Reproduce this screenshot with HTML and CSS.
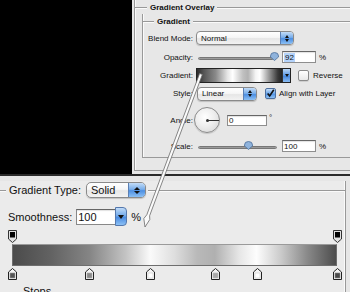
FILE: index.html
```html
<!DOCTYPE html>
<html>
<head>
<meta charset="utf-8">
<link rel="stylesheet" href="styles.css">
</head>
<body>
<div class="stage">
  <div class="top">
    <div class="void"></div>
    <div class="panel">
      <div class="group outer">
        <div class="gtitle t-outer"><span>Gradient Overlay</span></div>
        <div class="group inner">
          <div class="gtitle t-inner"><span>Gradient</span></div>
          <div class="form">
            <label class="lbl">Blend Mode:</label>
            <div class="ctl">
              <div class="select sel-blend"><span class="val">Normal</span><span class="step"><i class="up"></i><i class="dn"></i></span></div>
            </div>

            <label class="lbl">Opacity:</label>
            <div class="ctl">
              <div class="slider sl-opacity"><div class="track"></div><svg class="thumb" style="left:72px" width="9" height="9" viewBox="0 0 9 9"><path d="M0.5,4 A4,3.5 0 0 1 8.5,4 L8.5,5 L4.5,8.5 L0.5,5 Z" fill="#8fb3dc" stroke="#4d6f99" stroke-width="0.8"/></svg></div>
              <div class="field f-num"><span class="hl">92</span></div>
              <span class="unit">%</span>
            </div>

            <label class="lbl">Gradient:</label>
            <div class="ctl">
              <div class="gprev"><div class="gfill"></div><div class="garrow"><i class="dn"></i></div></div>
              <span class="check"></span>
              <span class="ctext">Reverse</span>
            </div>

            <label class="lbl">Style:</label>
            <div class="ctl">
              <div class="select sel-style"><span class="val">Linear</span><span class="step"><i class="up"></i><i class="dn"></i></span></div>
              <span class="check on"><svg width="11" height="11" viewBox="0 0 11 11"><path d="M2,5.5 L4.5,8.5 L9.5,1" fill="none" stroke="#111" stroke-width="2"/></svg></span>
              <span class="ctext c-align">Align with Layer</span>
            </div>

            <label class="lbl">Angle:</label>
            <div class="ctl">
              <div class="dial"><span class="hand"></span></div>
              <div class="field f-angle">0</div>
              <span class="deg">°</span>
            </div>

            <label class="lbl">Scale:</label>
            <div class="ctl">
              <div class="slider sl-scale"><div class="track"></div><svg class="thumb" style="left:46px" width="9" height="9" viewBox="0 0 9 9"><path d="M0.5,4 A4,3.5 0 0 1 8.5,4 L8.5,5 L4.5,8.5 L0.5,5 Z" fill="#8fb3dc" stroke="#4d6f99" stroke-width="0.8"/></svg></div>
              <div class="field f-num">100</div>
              <span class="unit">%</span>
            </div>
          </div>
        </div>
      </div>
    </div>
  </div>

  <div class="bottom">
    <div class="gtype">
      <div class="btitle">
        <span class="btext">Gradient Type:</span>
        <div class="select big sel-solid"><span class="val">Solid</span><span class="step"><i class="up"></i><i class="dn"></i></span></div>
      </div>
      <div class="smooth">
        <label class="blbl">Smoothness:</label>
        <div class="combo"><span class="cval">100</span><span class="cbtn"><i class="dn"></i></span></div>
        <span class="bunit">%</span>
      </div>
      <div class="ramp">
        <div class="ostops">
          <svg class="ostop" style="left:0%" width="9" height="13" viewBox="0 0 9 13"><path d="M0.5,0.5 H8.5 V9 L4.5,12.5 L0.5,9 Z" fill="#e0e0e0" stroke="#333" stroke-width="1"/><rect x="2" y="2" width="5" height="5.5" fill="#000"/></svg>
          <svg class="ostop" style="left:100%" width="9" height="13" viewBox="0 0 9 13"><path d="M0.5,0.5 H8.5 V9 L4.5,12.5 L0.5,9 Z" fill="#e0e0e0" stroke="#333" stroke-width="1"/><rect x="2" y="2" width="5" height="5.5" fill="#000"/></svg>
        </div>
        <div class="bar"></div>
        <div class="cstops">
          <svg class="cstop" style="left:0%" width="9" height="12" viewBox="0 0 9 12"><path d="M4.5,0.5 L8.5,4 V11.5 H0.5 V4 Z" fill="#f4f4f4" stroke="#222"/><rect x="2" y="5" width="5" height="5" fill="#555" stroke="#999" stroke-width="0.6"/></svg>
          <svg class="cstop" style="left:23.7%" width="9" height="12" viewBox="0 0 9 12"><path d="M4.5,0.5 L8.5,4 V11.5 H0.5 V4 Z" fill="#f4f4f4" stroke="#222"/><rect x="2" y="5" width="5" height="5" fill="#8a8a8a" stroke="#aaa" stroke-width="0.6"/></svg>
          <svg class="cstop" style="left:42.5%" width="9" height="12" viewBox="0 0 9 12"><path d="M4.5,0.5 L8.5,4 V11.5 H0.5 V4 Z" fill="#f4f4f4" stroke="#222"/><rect x="2" y="5" width="5" height="5" fill="#fff" stroke="#ccc" stroke-width="0.6"/></svg>
          <svg class="cstop" style="left:62.5%" width="9" height="12" viewBox="0 0 9 12"><path d="M4.5,0.5 L8.5,4 V11.5 H0.5 V4 Z" fill="#f4f4f4" stroke="#222"/><rect x="2" y="5" width="5" height="5" fill="#a8a8a8" stroke="#bbb" stroke-width="0.6"/></svg>
          <svg class="cstop" style="left:75.4%" width="9" height="12" viewBox="0 0 9 12"><path d="M4.5,0.5 L8.5,4 V11.5 H0.5 V4 Z" fill="#f4f4f4" stroke="#222"/><rect x="2" y="5" width="5" height="5" fill="#fff" stroke="#ccc" stroke-width="0.6"/></svg>
          <svg class="cstop" style="left:100%" width="9" height="12" viewBox="0 0 9 12"><path d="M4.5,0.5 L8.5,4 V11.5 H0.5 V4 Z" fill="#f4f4f4" stroke="#222"/><rect x="2" y="5" width="5" height="5" fill="#4a4a4a" stroke="#888" stroke-width="0.6"/></svg>
        </div>
      </div>
      <div class="stitle"><span>Stops</span></div>
    </div>
  </div>

  <svg class="needle" width="350" height="292" viewBox="0 0 350 292">
    <polygon points="199.6,73.5 202.4,74.5 149.6,215.8 149.8,219.5 145,227 143.8,218.5 146.8,214.8" fill="#fbfbfb" stroke="#6a6a6a" stroke-width="0.8" stroke-linejoin="round"/>
  </svg>
</div>
</body>
</html>
```

FILE: styles.css
```css
* { box-sizing: border-box; }
html, body { margin: 0; padding: 0; }
body {
  width: 350px;
  height: 292px;
  overflow: hidden;
  background: #000;
  font-family: "Liberation Sans", Arial, sans-serif;
  color: #111;
}
.stage {
  position: relative;
  width: 350px;
  height: 292px;
  overflow: hidden;
}

/* ---------- top panel ---------- */
.top {
  display: flex;
  height: 174px;
}
.void {
  width: 132px;
  background: #000;
}
.panel {
  flex: 1;
  background: #e7e7e7;
  padding-top: 7px;
  overflow: hidden;
  font-size: 8px;
}
.group {
  border-left: 1px solid #999;
  box-shadow: inset 1px 0 0 #fafafa;
}
.outer {
  margin-left: 2px;
  border-bottom: 1px solid #999;
  padding-bottom: 12px;
}
.inner {
  margin-left: 7px;
  margin-top: 7px;
  border-bottom: 1px solid #999;
}
.gtitle {
  display: flex;
  align-items: center;
  height: 14px;
  margin-top: -7px;
  font-weight: bold;
  font-size: 8px;
  color: #111;
  white-space: nowrap;
}
.gtitle::before,
.gtitle::after {
  content: "";
  height: 1px;
  background: #999;
  box-shadow: 0 1px 0 #fafafa;
}
.gtitle::after { flex: 1; }
.t-outer::before { width: 12px; }
.t-inner::before { width: 11px; }
.gtitle span { padding: 0 3px; }

.form {
  margin-top: 2px;
  display: grid;
  grid-template-columns: 50px 1fr;
  grid-template-rows: 16px 22px 14px 23px 30px 22px;
  column-gap: 3px;
}
.lbl {
  display: flex;
  align-items: center;
  justify-content: flex-end;
  white-space: nowrap;
  font-size: 8px;
}
.ctl {
  display: flex;
  align-items: center;
  white-space: nowrap;
}

/* aqua popup */
.select {
  display: flex;
  align-items: stretch;
  height: 14px;
  border: 1px solid #8a8a8a;
  border-radius: 4px;
  background: linear-gradient(#ffffff, #f6f6f6 45%, #e6e6e6 55%, #f2f2f2);
  box-shadow: 0 1px 1px rgba(0,0,0,0.18);
  overflow: hidden;
}
.select .val {
  flex: 1;
  display: flex;
  align-items: center;
  padding-left: 4px;
}
.select .step {
  width: 13px;
  border-left: 1px solid #5b7fb3;
  background: linear-gradient(#c3dcf7, #79aeea 45%, #4d8fe2 55%, #8cc0f4);
  display: flex;
  flex-direction: column;
  align-items: center;
  justify-content: center;
  gap: 1px;
}
.up, .dn {
  display: block;
  width: 0;
  height: 0;
  border-left: 2.5px solid transparent;
  border-right: 2.5px solid transparent;
}
.up { border-bottom: 3px solid #111; }
.dn { border-top: 3px solid #111; }
.sel-blend { width: 98px; }
.sel-style { width: 60px; margin-left: 1px; }

/* slider */
.slider {
  position: relative;
  height: 10px;
  margin-left: 2px;
}
.sl-opacity { width: 76px; }
.sl-scale { width: 79px; }
.track {
  position: absolute;
  left: 0;
  right: 0;
  top: 5px;
  height: 3px;
  border-radius: 2px;
  background: linear-gradient(#7d7d7d, #b8b8b8);
  border: 0.5px solid #777;
}
.thumb {
  position: absolute;
  top: 0;
}

/* text field */
.field {
  height: 12px;
  background: #fff;
  border: 1px solid #8e8e8e;
  border-top-color: #666;
  box-shadow: inset 0 1px 1px rgba(0,0,0,0.12);
  display: flex;
  align-items: center;
  padding-left: 1px;
  font-size: 8px;
}
.f-num { width: 34px; margin-left: 8px; }
.sl-scale + .f-num { margin-left: 5px; }
.hl {
  background: #b4d3fb;
  padding: 0 1px;
}
.unit { margin-left: 3px; font-size: 8px; }

/* gradient preview */
.gprev {
  display: flex;
  width: 95px;
  height: 15px;
  border: 1px solid #222;
}
.gfill {
  flex: 1;
  background: linear-gradient(90deg, #2c2c2c 0%, #555 8%, #8a8a8a 22%, #e6e6e6 36%, #ffffff 42%, #c0c0c0 54%, #b2b2b2 60%, #f4f4f4 69%, #ffffff 74%, #a0a0a0 84%, #3a3a3a 95%, #222 100%);
}
.garrow {
  width: 8px;
  background: linear-gradient(#b9d6f6, #5a97e4 50%, #3f82dc 51%, #8bbcf1);
  border-left: 1px solid #333;
  display: flex;
  align-items: center;
  justify-content: center;
}
.check {
  width: 11px;
  height: 11px;
  margin-left: 7px;
  border: 1px solid #8a8a8a;
  border-radius: 2px;
  background: linear-gradient(#fff, #e9e9e9);
  box-shadow: 0 1px 0 rgba(0,0,0,0.1);
  display: inline-flex;
}
.check.on {
  margin-left: 8px;
  background: linear-gradient(#c7def8, #6ba6ea 50%, #4a8de2 51%, #8fc1f3);
  border-color: #4d6f9e;
  overflow: visible;
}
.check.on svg { margin-top: -1px; }
.ctext { margin-left: 4px; font-size: 8px; }
.c-align { margin-left: 3px; }

/* angle dial */
.dial {
  position: relative;
  width: 26px;
  height: 26px;
  margin-left: -2px;
  border-radius: 50%;
  border: 1px solid #8a8a8a;
  background: radial-gradient(circle at 42% 38%, #ffffff 0%, #eeeeee 45%, #d2d2d2 100%);
  box-shadow: 0 1px 1px rgba(0,0,0,0.15);
}
.hand {
  position: absolute;
  left: 12px;
  top: 12px;
  width: 12px;
  height: 1px;
  background: #333;
}
.hand::before {
  content: "";
  position: absolute;
  left: -1px;
  top: -1px;
  width: 3px;
  height: 3px;
  border-radius: 50%;
  background: #333;
}
.f-angle {
  width: 40px;
  height: 11px;
  margin-left: 7px;
}
.deg {
  margin-left: 2px;
  align-self: flex-start;
  margin-top: 8px;
  font-size: 8px;
}

/* ---------- bottom panel ---------- */
.bottom {
  height: 118px;
  border-top: 2px solid #2a2a2a;
  background: #e6e6e6;
  padding-top: 14px;
  font-size: 11px;
}
.gtype {
  width: 346px;
  border-right: 1px solid #999;
  box-shadow: inset -1px 0 0 #fafafa;
  height: 120px;
  background: #ebebeb;
}
.btitle {
  display: flex;
  align-items: center;
  height: 18px;
  margin-top: -9px;
  white-space: nowrap;
}
.btitle::before,
.btitle::after {
  content: "";
  height: 1px;
  background: #999;
  box-shadow: 0 1px 0 #fafafa;
}
.btitle::before { width: 6px; }
.btitle::after { flex: 1; margin-left: 2px; }
.btext { padding: 0 3px; }
.select.big {
  height: 16px;
  border-radius: 5px;
  margin-left: 2px;
}
.sel-solid { width: 60px; }
.select.big .step { width: 17px; }
.select.big .up { border-bottom-width: 3.5px; border-left-width: 3px; border-right-width: 3px; }
.select.big .dn { border-top-width: 3.5px; border-left-width: 3px; border-right-width: 3px; }

.smooth {
  display: flex;
  align-items: center;
  height: 19px;
  margin-top: 8px;
  padding-left: 8px;
  white-space: nowrap;
}
.combo {
  display: flex;
  align-items: center;
  margin-left: 4px;
  height: 19px;
}
.cval {
  width: 39px;
  height: 16px;
  background: #fff;
  border: 1px solid #888;
  border-top-color: #666;
  border-right: none;
  display: flex;
  align-items: center;
  padding-left: 1px;
  box-shadow: inset 0 1px 1px rgba(0,0,0,0.12);
}
.cbtn {
  width: 12px;
  height: 19px;
  border: 1px solid #5478ad;
  border-radius: 0 4px 4px 0;
  background: linear-gradient(#c0dbf8, #73aaea 45%, #4a8ce2 55%, #8cc0f4);
  display: flex;
  align-items: center;
  justify-content: center;
}
.cbtn .dn { border-top-width: 4px; border-left-width: 3px; border-right-width: 3px; }
.bunit { margin-left: 4px; }

.ramp {
  margin-left: 12px;
  width: 325px;
  margin-top: 4px;
}
.ostops, .cstops {
  position: relative;
}
.ostops { height: 13px; }
.cstops { height: 12px; margin-top: 2px; }
.ostop, .cstop {
  position: absolute;
  top: 0;
  margin-left: -4px;
}
.bar {
  height: 22px;
  margin-top: 1px;
  border: 1px solid #6e6e6e;
  border-top-color: #9a9a9a;
  background: linear-gradient(90deg, #4b4b4b 0%, #636363 12%, #858585 23.7%, #c4c4c4 35%, #fafafa 42.5%, #dedede 50%, #b9b9b9 57%, #b0b0b0 62.5%, #e6e6e6 70%, #fdfdfd 75.4%, #cacaca 83%, #8a8a8a 91%, #4d4d4d 100%);
}
.stitle {
  margin-top: 4px;
  padding-left: 23px;
  height: 14px;
  line-height: 14px;
}

/* ---------- connector needle ---------- */
.needle {
  position: absolute;
  left: 0;
  top: 0;
  pointer-events: none;
}
```
